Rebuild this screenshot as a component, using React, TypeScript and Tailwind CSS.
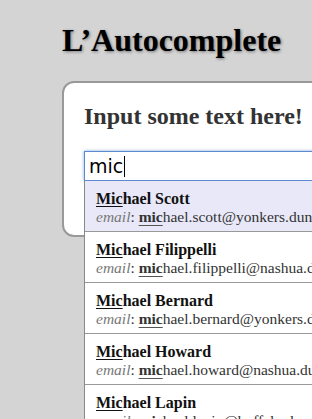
import React from "react";

type Person = { first: string; last: string; email: string };

const people: Person[] = [
  { first: "Michael", last: "Scott", email: "michael.scott@yonkers.dundermifflin.com" },
  { first: "Michael", last: "Filippelli", email: "michael.filippelli@nashua.dundermifflin.com" },
  { first: "Michael", last: "Bernard", email: "michael.bernard@yonkers.dundermifflin.com" },
  { first: "Michael", last: "Howard", email: "michael.howard@nashua.dundermifflin.com" },
  { first: "Michael", last: "Lapin", email: "michael.lapin@buffalo.dundermifflin.com" },
];

const query = "mic";

const App: React.FC = () => {
  return (
    <div className="h-[419px] w-full overflow-hidden bg-[#d4d4d4] font-['Liberation_Serif',serif]">
      <div className="pl-[62px] pt-[22px]">
        <h1 className="text-[32px] leading-[36px] font-bold text-black [text-shadow:1px_1px_3px_rgba(0,0,0,0.45)]">
          L’Autocomplete
        </h1>
        <div className="mt-[23px] w-[440px] rounded-[12px] border-2 border-[#999] bg-white pl-[20px] pt-[19px] pb-[54px]">
          <h2 className="text-[24px] leading-[28px] font-bold text-[#333]">
            Input some text here!
          </h2>
          <div className="relative mt-[21px] w-[400px]">
            <div className="flex h-[30px] items-center border border-[#5b8ad0] bg-white pl-[4px] font-['DejaVu_Sans',sans-serif] text-[19px] text-black shadow-[0_0_3px_rgba(80,130,210,0.7)]">
              <span>{query}</span>
              <span className="ml-[1px] inline-block h-[21px] w-[1px] bg-black" />
            </div>
            <ul className="absolute left-0 top-full z-10 w-[400px] border border-t-0 border-[#888] bg-white">
              {people.map((p, i) => (
                <li
                  key={p.last}
                  className={`border-b border-[#999] pl-[11px] pt-[8px] pb-[6px] ${
                    i === 0 ? "bg-[#e8e8f8]" : "bg-white"
                  }`}
                >
                  <div className="text-[16px] leading-[19px] font-bold text-[#111] whitespace-nowrap">
                    <span className="underline decoration-1 underline-offset-[2px]">
                      {p.first.slice(0, 3)}
                    </span>
                    {p.first.slice(3)} {p.last}
                  </div>
                  <div className="text-[15.5px] leading-[17px] text-[#333] whitespace-nowrap">
                    <em className="text-[#777]">email</em>:{" "}
                    <strong className="underline decoration-1 decoration-[#555] underline-offset-[3px]">
                      {p.email.slice(0, 3)}
                    </strong>
                    {p.email.slice(3)}
                  </div>
                </li>
              ))}
            </ul>
          </div>
        </div>
      </div>
    </div>
  );
};

export default App;
